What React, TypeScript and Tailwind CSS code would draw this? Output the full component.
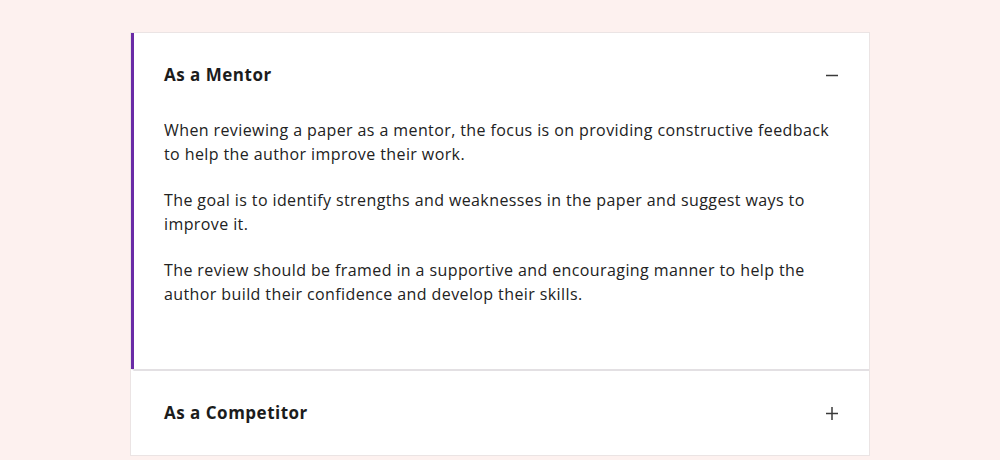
import { useState } from "react";

const items = [
  {
    title: "As a Mentor",
    body: [
      "When reviewing a paper as a mentor, the focus is on providing constructive feedback to help the author improve their work.",
      "The goal is to identify strengths and weaknesses in the paper and suggest ways to improve it.",
      "The review should be framed in a supportive and encouraging manner to help the author build their confidence and develop their skills.",
    ],
  },
  {
    title: "As a Competitor",
    body: [
      "When reviewing a paper as a competitor, the focus is on evaluating the work critically against the state of the art.",
    ],
  },
];

function Toggle({ open }: { open: boolean }) {
  return (
    <svg width="14" height="14" viewBox="0 0 14 14" className="text-[#3a3a3a]">
      <path d="M1 7.5h12" stroke="currentColor" strokeWidth="1.5" />
      {!open && <path d="M7 1v13" stroke="currentColor" strokeWidth="1.5" />}
    </svg>
  );
}

export default function App() {
  const [open, setOpen] = useState(0);

  return (
    <div
      className="min-h-[460px] bg-[#fdf1ef] pt-[32px]"
      style={{ fontFamily: '"Open Sans", "Noto Sans", sans-serif' }}
    >
      <div className="mx-auto w-[740px] bg-white border border-[#ebe4e4]">
        {items.map((item, i) => {
          const isOpen = open === i;
          return (
            <div
              key={item.title}
              className={
                (i > 0 ? "border-t-2 border-t-[#e3e0e3] " : "") +
                (isOpen ? "border-l-[3px] border-l-[#6a2ba6]" : "border-l-[3px] border-l-transparent")
              }
            >
              <button
                onClick={() => setOpen(isOpen ? -1 : i)}
                className="flex w-full items-center justify-between pl-[30px] pr-[30px] h-[84px] text-left"
              >
                <span className="text-[17px] font-bold text-[#1c1c1c] tracking-[0.5px]">{item.title}</span>
                <Toggle open={isOpen} />
              </button>
              {isOpen && (
                <div className="pl-[30px] pr-[36px] pt-[1px] pb-[63px] text-[16px] leading-6 text-[#222] tracking-[0.4px]">
                  {item.body.map((p, j) => (
                    <p key={j} className={j < item.body.length - 1 ? "mb-[22px]" : ""}>
                      {p}
                    </p>
                  ))}
                </div>
              )}
            </div>
          );
        })}
      </div>
    </div>
  );
}
